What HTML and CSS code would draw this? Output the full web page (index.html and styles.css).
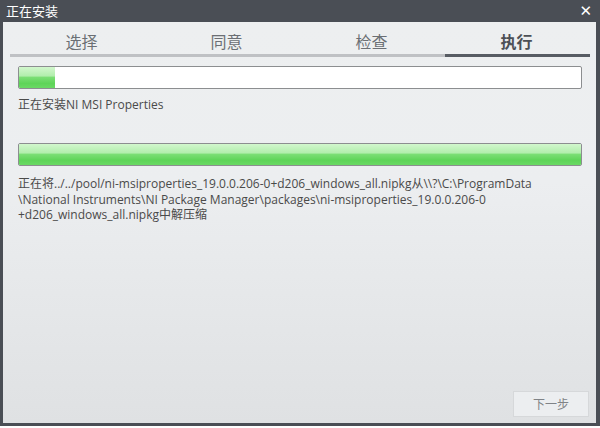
FILE: index.html
```html
<!DOCTYPE html>
<html>
<head>
<meta charset="utf-8">
<link rel="stylesheet" href="styles.css">
</head>
<body>
<div class="window">
  <div class="titlebar">
    <span class="title">正在安装</span>
    <span class="close">✕</span>
  </div>
  <div class="content">
    <div class="steps">
      <div class="tabs">
        <div class="tab">选择</div>
        <div class="tab">同意</div>
        <div class="tab">检查</div>
        <div class="tab active">执行</div>
      </div>
      <div class="track">
        <div class="track-done"></div>
        <div class="track-current"></div>
      </div>
    </div>
    <div class="body">
      <div class="bar"><div class="fill" style="width: 36px"></div></div>
      <div class="msg">正在安装NI MSI Properties</div>
      <div class="bar bar2"><div class="fill" style="width: 100%"></div></div>
      <div class="msg detail">正在将../../pool/ni-msiproperties_19.0.0.206-0+d206_windows_all.nipkg从\\?\C:\ProgramData<br>\National Instruments\NI Package Manager\packages\ni-msiproperties_19.0.0.206-0<br>+d206_windows_all.nipkg中解压缩</div>
    </div>
    <div class="footer">
      <button class="next">下一步</button>
    </div>
  </div>
</div>
</body>
</html>
```
FILE: styles.css
```css
html, body {
  margin: 0;
  padding: 0;
  background: #ffffff;
}
body {
  font-family: "Open Sans", "Noto Sans CJK SC", sans-serif;
  width: 600px;
  height: 428px;
  overflow: hidden;
}
.window {
  width: 600px;
  height: 426px;
  display: flex;
  flex-direction: column;
  background: #4a4e55;
}
.titlebar {
  height: 22px;
  flex: none;
  display: flex;
  align-items: center;
  justify-content: space-between;
  padding: 0 8px 0 6px;
  color: #ffffff;
}
.title {
  font-size: 13px;
  line-height: 22px;
}
.close {
  font-size: 15px;
  font-weight: bold;
  font-family: "DejaVu Sans", sans-serif;
  line-height: 22px;
}
.content {
  flex: 1;
  margin: 0 4px 3px 3px;
  background: linear-gradient(#edeff0, #eceef0 40%, #dfe1e3);
  display: flex;
  flex-direction: column;
}
.steps {
  margin: 0 6px 0 7px;
}
.tabs {
  display: flex;
  height: 32px;
}
.tab {
  flex: 1;
  display: flex;
  align-items: center;
  justify-content: center;
  font-size: 16px;
  color: #6b6f74;
  padding-top: 5px;
  box-sizing: border-box;
  padding-right: 2px;
}
.tab.active {
  color: #4c5056;
  font-weight: bold;
}
.track {
  display: flex;
  height: 3px;
}
.track-done {
  flex: 3;
  background: #bfc1c4;
}
.track-current {
  flex: 1;
  background: #575c63;
}
.body {
  padding: 9px 14px 0 15px;
  flex: 1;
}
.bar {
  height: 23px;
  box-sizing: border-box;
  border: 1px solid #8c8e90;
  border-radius: 2px;
  background: #ffffff;
  overflow: hidden;
}
.bar2 {
  margin-top: 30px;
}
.fill {
  height: 100%;
  background: linear-gradient(#d2f7cd 0%, #b2eead 42%, #7ade74 50%, #5ed458 78%, #6ad964 100%);
}
.msg {
  font-size: 12px;
  color: #4a4a4a;
  line-height: 16px;
  margin-top: 8px;
}
.detail {
  line-height: 15.5px;
  margin-top: 10px;
}
.footer {
  display: flex;
  justify-content: flex-end;
  padding: 0 7px 6px 0;
}
.next {
  width: 76px;
  height: 26px;
  border: 1px solid #d6d8da;
  background: #eceef0;
  color: #808387;
  font-family: "Open Sans", "Noto Sans CJK SC", sans-serif;
  font-size: 12px;
  padding: 0;
}
```
